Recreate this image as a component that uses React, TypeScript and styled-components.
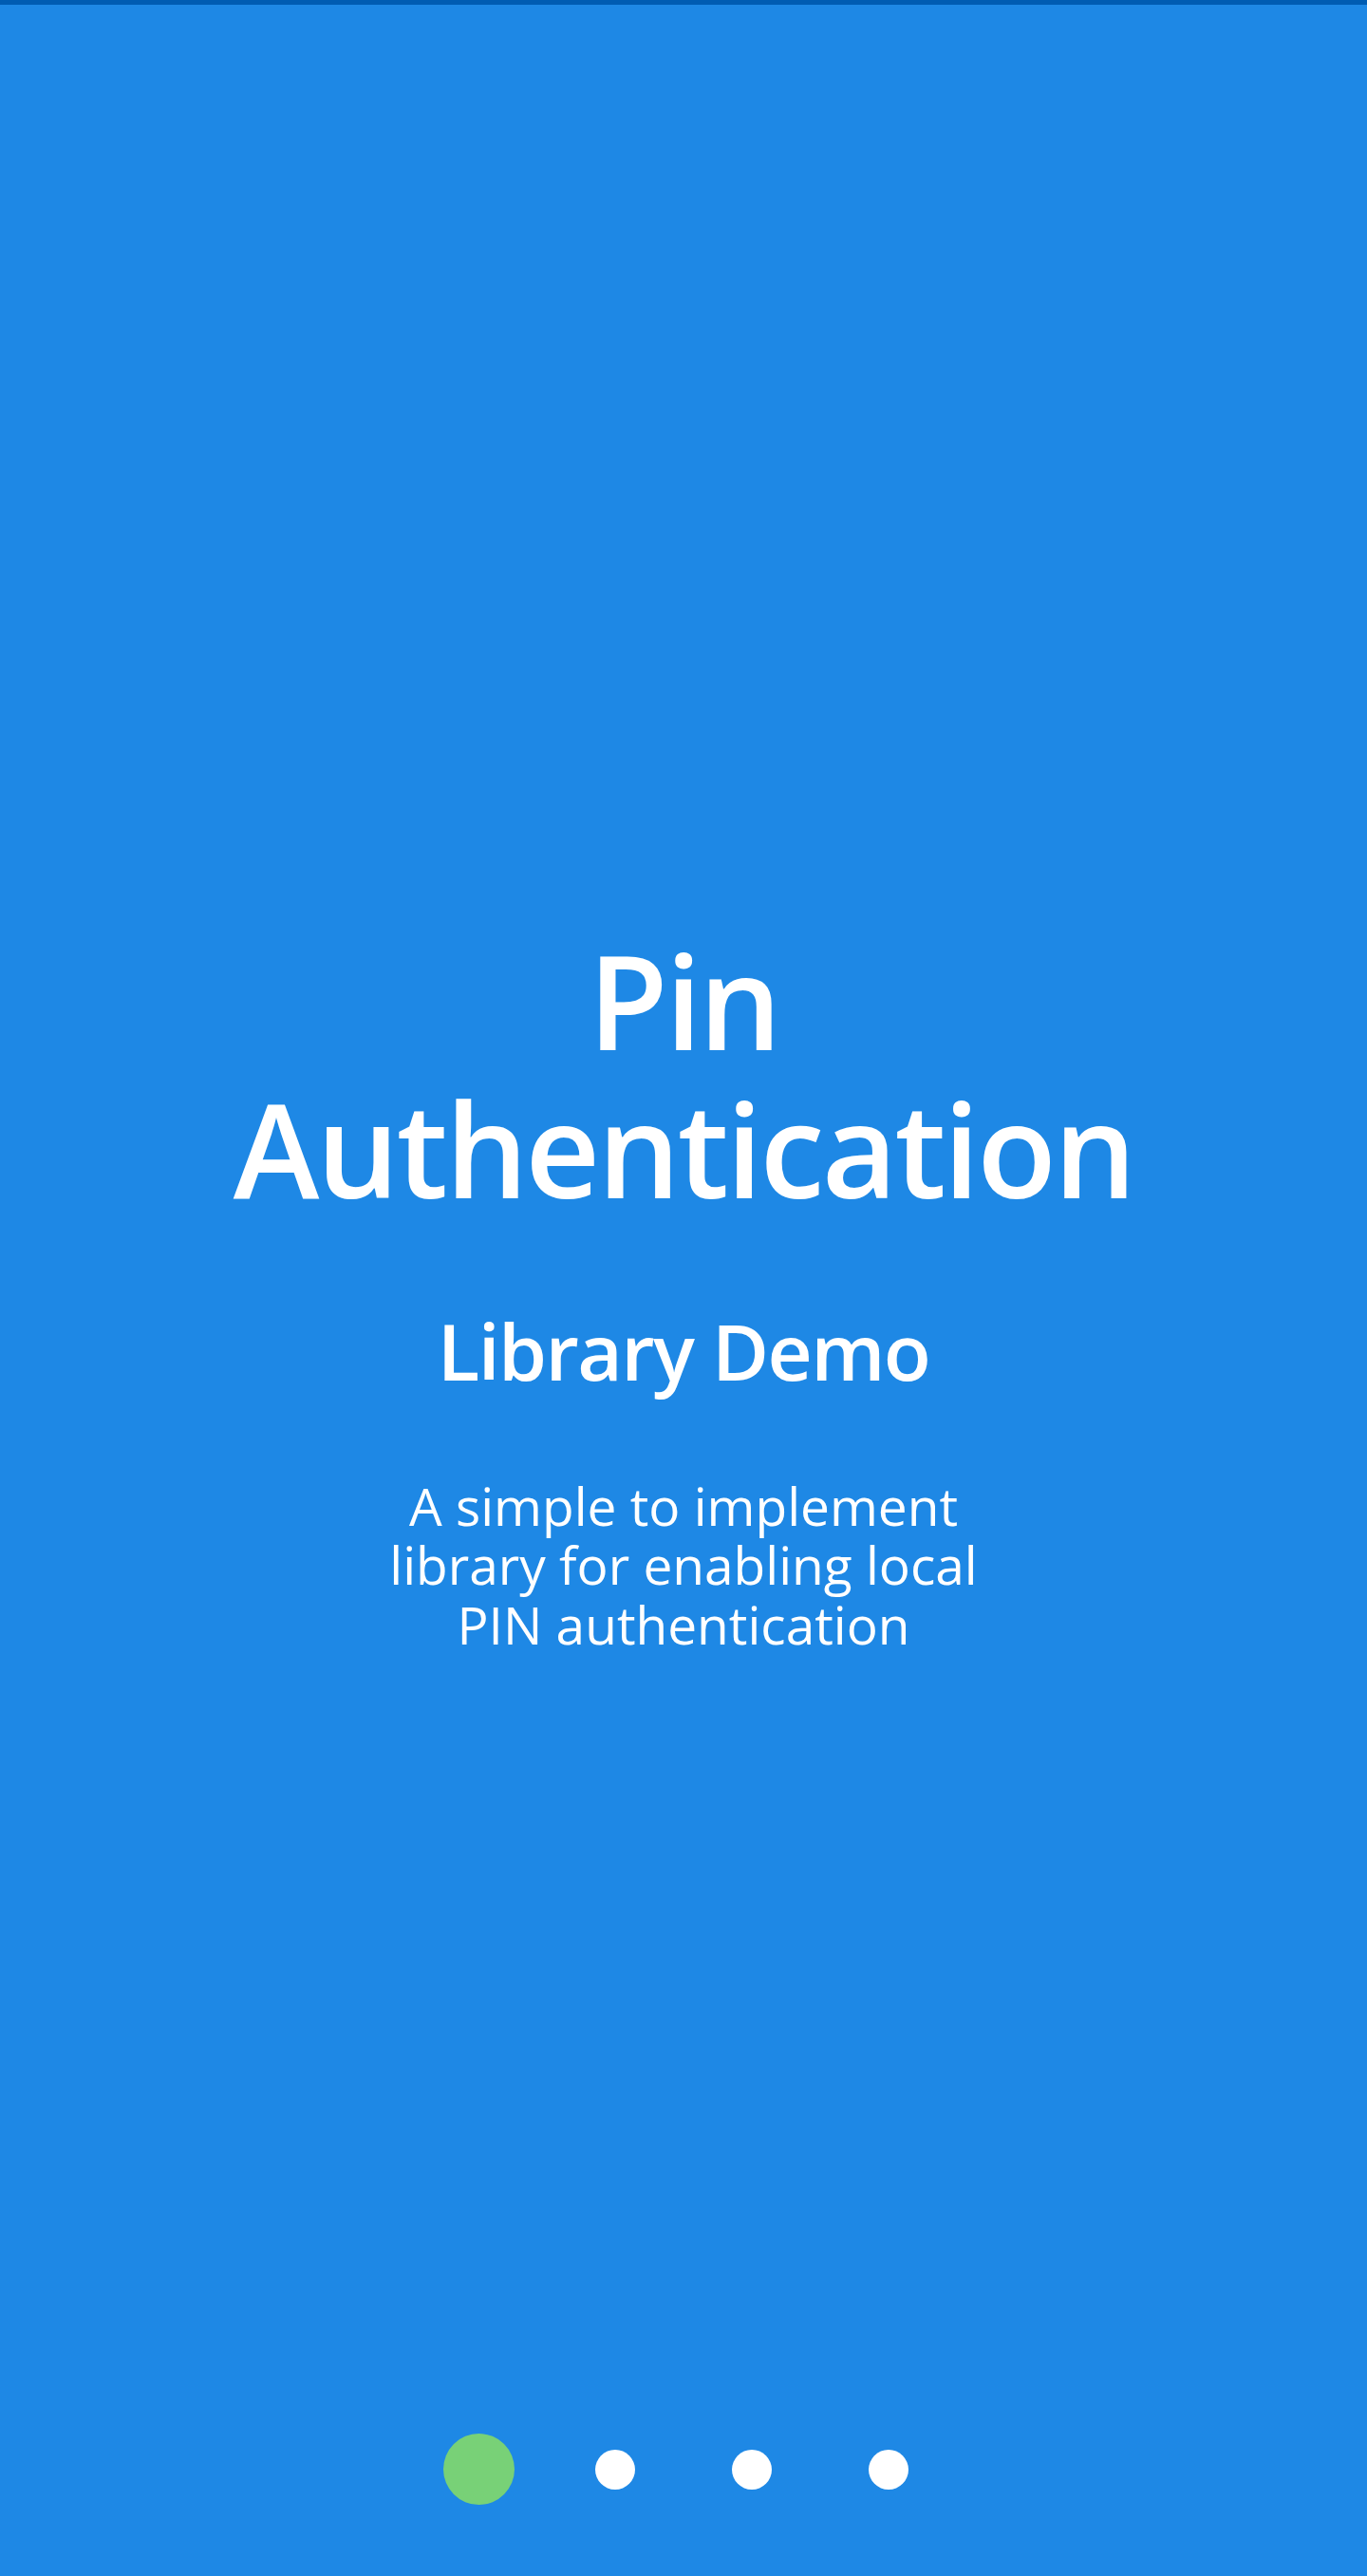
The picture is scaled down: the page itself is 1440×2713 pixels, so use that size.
import React from "react";
import styled, { createGlobalStyle } from "styled-components";

const GlobalStyle = createGlobalStyle`
  html, body {
    margin: 0;
    padding: 0;
    background: #1e88e5;
  }
  body {
    font-family: "Open Sans", "Noto Sans", sans-serif;
    color: #ffffff;
  }
`;

const Screen = styled.div`
  min-height: 2713px;
  display: flex;
  flex-direction: column;
  background: #1e88e5;
  box-sizing: border-box;
`;

const StatusStrip = styled.div`
  height: 5px;
  flex: 0 0 auto;
  background: #005cb2;
`;

const Intro = styled.main`
  display: flex;
  flex-direction: column;
  align-items: center;
  padding-top: 970px;
  text-align: center;
`;

const Title = styled.h1`
  margin: 0;
  max-width: 1000px;
  font-size: 137px;
  font-weight: 600;
  letter-spacing: -2.8px;
  line-height: 156px;
  color: #ffffff;
`;

const Subtitle = styled.h2`
  margin: 86px 0 0;
  font-size: 82px;
  font-weight: 600;
  letter-spacing: -1.6px;
  line-height: 98px;
  color: #ffffff;
`;

const Description = styled.p`
  margin: 84px 0 0;
  max-width: 650px;
  font-size: 55px;
  font-weight: 400;
  line-height: 62.4px;
  color: #ffffff;
`;

const Pager = styled.nav`
  margin-top: auto;
  display: flex;
  justify-content: center;
  align-items: center;
  height: 75px;
  padding-bottom: 75px;
`;

const DotSlot = styled.div`
  width: 144px;
  display: flex;
  justify-content: center;
  align-items: center;
`;

const Dot = styled.span<{ $active?: boolean }>`
  display: block;
  border-radius: 50%;
  width: ${(p) => (p.$active ? 75 : 42)}px;
  height: ${(p) => (p.$active ? 75 : 42)}px;
  background: ${(p) => (p.$active ? "#78d177" : "#ffffff")};
`;

export default function App() {
  const pages = [0, 1, 2, 3];
  const current = 0;
  return (
    <>
      <GlobalStyle />
      <Screen>
        <StatusStrip />
        <Intro>
          <Title>Pin Authentication</Title>
          <Subtitle>Library Demo</Subtitle>
          <Description>A simple to implement library for enabling local PIN authentication</Description>
        </Intro>
        <Pager>
          {pages.map((i) => (
            <DotSlot key={i}>
              <Dot $active={i === current} />
            </DotSlot>
          ))}
        </Pager>
      </Screen>
    </>
  );
}
